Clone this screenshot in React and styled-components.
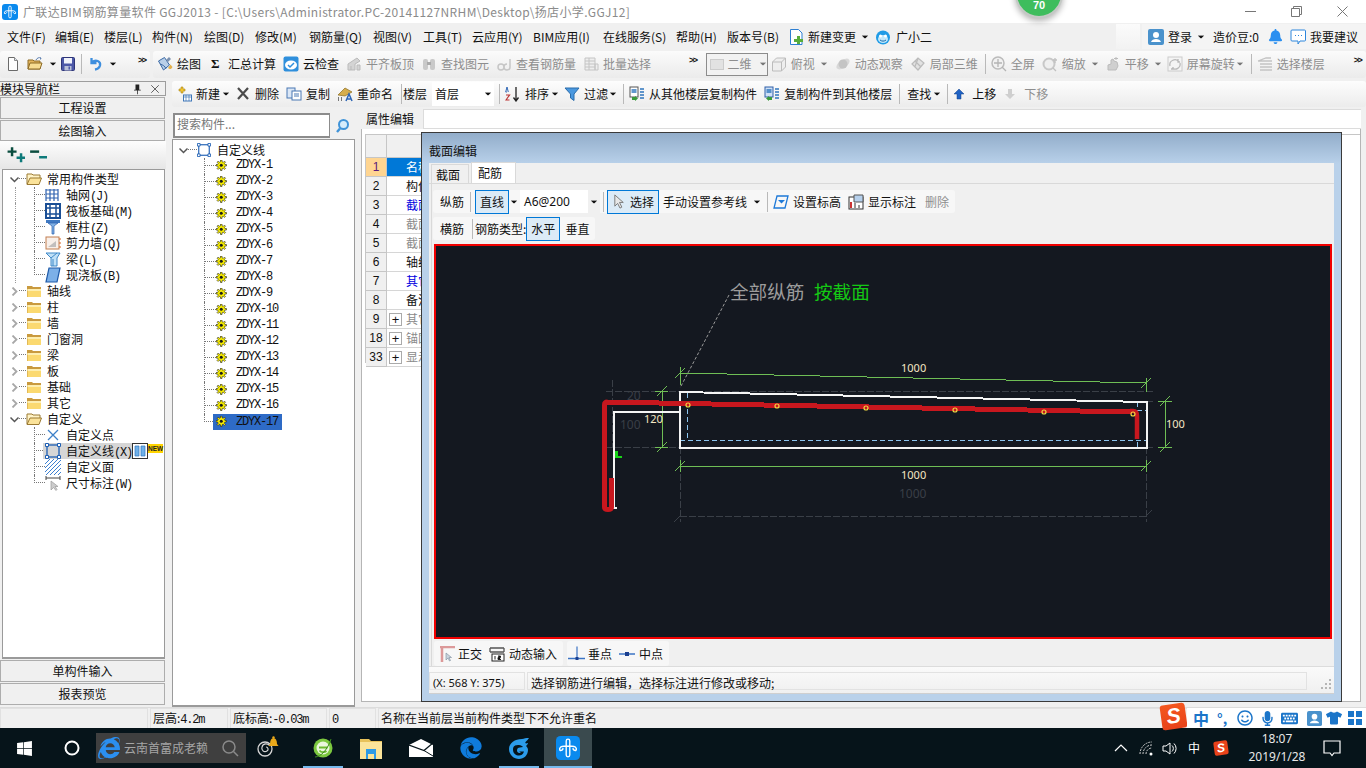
import React from 'react'
import styled, { createGlobalStyle } from 'styled-components'
import { FaWindows, FaEdge, FaInternetExplorer, FaBell, FaTshirt, FaMicrophone, FaRegSmile, FaKeyboard } from 'react-icons/fa'

const CJK = '"Noto Sans CJK SC", "Noto Sans", sans-serif'
const MONO = '"Liberation Mono", monospace'

const GlobalStyle = createGlobalStyle`
    html, body { margin: 0; padding: 0; overflow: hidden; background: #f0f0f0; }
    * { box-sizing: border-box; }
    body { font-family: ${CJK}; font-size: 12px; color: #111; }
`

const Screen = styled.div`
    position: relative;
    width: 1366px;
    height: 768px;
    display: flex;
    flex-direction: column;
    overflow: hidden;
    line-height: 16px;
    white-space: nowrap;
`

/* ---- icons ---- */
const Glyph = styled.svg`
    width: ${p => p.$s || 16}px;
    height: ${p => p.$s || 16}px;
    flex-shrink: 0;
    display: block;
    margin-left: ${p => p.$ml || 0}px;
`

const paths = {
    logo: <><rect width="16" height="16" rx="3" fill="#0a8aee"/><path d="M6.800 3.300a1.200 1.200 0 0 1 2.400 0v9.400a1.200 1.200 0 0 1-2.400 0z" fill="none" stroke="#fff" strokeWidth=".9"/><path d="M2.500 9.500C2 7.500 3.500 6.600 6 6.800h4c2.500-.2 4 .7 3.500 2.700M2.500 9.500c1.200.4 2-.3 2.300-1.300M13.500 9.500c-1.200.4-2-.3-2.300-1.300" fill="none" stroke="#fff" strokeWidth="1"/></>,
    newDoc: <><path d="M3.500 1.500h6l3 3v10h-9z" fill="#fdfdfd" stroke="#6a6a6a"/><path d="M9.500 1.500v3h3" fill="#dfe6ef" stroke="#8a8a8a"/></>,
    open: <><path d="M1 4h5l1 1h6v8H1z" fill="#e2b45c" stroke="#8d6a25"/><path d="M3 7h12l-2 6H1z" fill="#f7dc92" stroke="#8d6a25"/><path d="M9 4c1-2 3-3 5-2l-1 .5M14 2l-.5 1.500" stroke="#5d7fb0" fill="none"/></>,
    save: <><rect x="1.500" y="1.500" width="13" height="13" rx="1" fill="#4c58a8" stroke="#2e3578"/><rect x="4" y="2" width="8" height="5.500" fill="#f0f2fa"/><rect x="4.500" y="10" width="7" height="4.500" fill="#b9c0d8"/><rect x="8.500" y="10.500" width="1.500" height="3" fill="#4c58a8"/></>,
    undo: <path d="M4.500 2v5h5M5 6.500C8.500 3 14 5 13 9.500c-.5 2-2.500 3.500-5 4" stroke="#3d8ede" strokeWidth="2.300" fill="none"/>,
    draw: <><path d="M1.500 5l6-3.500 5 7.500-6 5z" fill="#b9cfe8" stroke="#3c6aa5"/><path d="M3 8c3 1 5 2 6 5" stroke="#3c6aa5" fill="none"/><path d="M9 4l3-3 2 2-3 3z" fill="#7c92b0"/><path d="M11 12c2 2 3.500 1 4.500-1l-2-2.500z" fill="#e3b04b"/></>,
    cloud: <><rect x="0.500" y="0.500" width="15" height="15" rx="2" fill="#2f8fdc"/><ellipse cx="8" cy="9" rx="6" ry="4.500" fill="#fff"/><path d="M5 9l2 2 4-4" stroke="#2f8fdc" strokeWidth="1.500" fill="none"/></>,
    flatten: <path d="M2 14V8l9-6 3 3-5 3v6zM5 14v-4M11 9h3v5h-3z" fill="#d4d4d4" stroke="#bbb"/>,
    binoculars: <><rect x="2" y="3" width="5" height="11" rx="2" fill="#c9c9c9"/><rect x="9" y="3" width="5" height="11" rx="2" fill="#c9c9c9"/><rect x="6" y="6" width="4" height="3" fill="#aaa"/></>,
    glasses: <path d="M2 11a3 3 0 1 0 6 0a3 3 0 1 0-6 0M14 3v8a3 3 0 1 1-3-3" stroke="#c6c6c6" strokeWidth="1.500" fill="none"/>,
    batch: <path d="M2 2h10v12H2zM2 5h10M2 8h10M2 11h10M6 2v12M12 8h3v6h-3z" stroke="#c4c4c4" fill="#eee"/>,
    cube: <path d="M1.500 6l4-4h9v9l-4 4h-9zM1.500 6h9v9M10.500 6l4-4" stroke="#bcbcbc" fill="#eeeeee"/>,
    orbit: <><ellipse cx="8" cy="8" rx="7.500" ry="4" transform="rotate(-35 8 8)" fill="#d8d8d8"/><circle cx="8" cy="8" r="4.500" fill="#c4c4c4"/></>,
    local3d: <path d="M2 8l6-6 6 5-6 7zM5 5l6 6M8 2.500l-3 8" stroke="#bbb" strokeWidth="1.200" fill="#e2e2e2"/>,
    zoomFit: <><circle cx="7" cy="7" r="6" fill="#f1f1f1" stroke="#bbb" strokeWidth="1.500"/><path d="M7 3v8M3 7h8M11 11l4 4" stroke="#b4b4b4" strokeWidth="1.300"/></>,
    zoomQ: <><circle cx="7" cy="8" r="5.500" fill="#efefef" stroke="#c8c8c8" strokeWidth="2"/><path d="M11 12l3 3M13 2v5M11 4h4" stroke="#c0c0c0" strokeWidth="1.300"/></>,
    pan: <path d="M3 14V9l3-1V4l2-1 1 2 3 1 1 4-2 4zM11 1v3M9 2.500h4" stroke="#bbb" fill="#cfcfcf"/>,
    rotate: <><rect x="1" y="1" width="14" height="14" fill="#f4f4f4" stroke="#ccc"/><path d="M3 10a5 5 0 0 1 9-4M13 7a5 5 0 0 1-8 5M4 13h2v-2M11 3v3h2" stroke="#b9b9b9" strokeWidth="1.300" fill="none"/></>,
    floors: <path d="M1 5l8-3h5M1 5h14M3 8h12M3 11h12M3 14h12" stroke="#c3c3c3" strokeWidth="1.300" fill="none"/>,
    newItem: <><path d="M5 1h2v2h2v2H7v2H5V5H3V3h2z" fill="#f2c531" stroke="#a98314" strokeWidth=".6"/><rect x="7.500" y="9" width="8" height="6" fill="#fff" stroke="#3f77b8"/><path d="M7.500 11h8M10 9v6M13 9v6" stroke="#3f77b8" strokeWidth=".7"/></>,
    del: <path d="M3 2l10 11M13 2L3 13" stroke="#4b4b4b" strokeWidth="2.200"/>,
    copy: <><rect x="1" y="2" width="8" height="10" fill="#dbe7f6" stroke="#4b79b3"/><rect x="6" y="5" width="9" height="9" fill="#fff" stroke="#4b79b3"/><path d="M8 8h5M8 10h5" stroke="#4b79b3"/></>,
    rename: <><path d="M1 9l7-7 7 4-7 4z" fill="#d6ad4b" stroke="#8a6c1f" strokeWidth=".7"/><path d="M9 15l3-7 3 7M10.500 13h3" stroke="#2e66b5" strokeWidth="1.500" fill="none"/><path d="M1 11h1v4H1zM4 11h1v4H4z" fill="#777"/></>,
    sort: <><path d="M2 1L.700 6h1.200M2 1l1.300 5" stroke="#2e66b5" fill="none"/><path d="M1 9h3.500L1 14h3.500" stroke="#b33" strokeWidth="1.200" fill="none"/><path d="M11 1v13M8.500 11.500L11 15l2.500-3.500" stroke="#222" strokeWidth="1.300" fill="none"/></>,
    filter: <path d="M1 2h14L10 8v6.500L6.500 12V8z" fill="#4a98df" stroke="#2a6cab"/>,
    copyFrom: <><rect x="1" y="1" width="8" height="10" fill="#fff" stroke="#555"/><path d="M2.500 4h5M2.500 6h5M11 3h4M11 6h4M11 9h4M11 12h4" stroke="#2f75bd" strokeWidth="1.300"/><path d="M3 11h3v-1l3 2.500L6 15v-1H3z" fill="#3a9a3c"/></>,
    copyTo: <><rect x="1" y="1" width="8" height="10" fill="#cfe0f6" stroke="#2f5fa8"/><path d="M2.500 4h5M2.500 6h5M11 3h4M11 6h4M11 9h4M11 12h4" stroke="#2f75bd" strokeWidth="1.300"/><path d="M6 11H3v-1l-3 2.500L3 15v-1h3z" fill="#3a9a3c" transform="translate(2 0)"/></>,
    up: <path d="M8 3l5 5h-3v5H6V8H3z" fill="#1f62c4" stroke="#124088" strokeWidth=".5"/>,
    down: <path d="M6 3h4v5h3l-5 5-5-5h3z" fill="#cfcfcf"/>,
    change: <><path d="M2.500.500h8l3.500 3.500v11.500H2.500z" fill="#fff" stroke="#2d7fd3"/><path d="M9 8h3v3h3v3h-3v2H9v-2H6v-3h3z" fill="#58ad3b" transform="translate(0 -1)"/></>,
    face: <><circle cx="8" cy="8.500" r="7" fill="#1f9be6"/><ellipse cx="8" cy="10" rx="5" ry="4" fill="#bfe7fb"/><circle cx="5.500" cy="7" r="1.500" fill="#fff"/><circle cx="10.500" cy="7" r="1.500" fill="#fff"/><path d="M5 11c2 1.500 4 1.500 6 0" stroke="#1767a8" fill="none"/></>,
    login: <><rect width="16" height="16" rx="2" fill="#4a92cc"/><circle cx="8" cy="6" r="3" fill="#fff"/><path d="M3 13c1-4 9-4 10 0z" fill="#fff"/></>,
    chat: <><path d="M2 1h12.500a1 1 0 0 1 1 1v9a1 1 0 0 1-1 1H10l-2 3v-3H2a1 1 0 0 1-1-1V2a1 1 0 0 1 1-1z" fill="#fff" stroke="#2d86dc"/><path d="M5 6.500h1M8 6.500h1M11 6.500h1" stroke="#2d86dc"/></>,
    pin: <path d="M6 2h5v7h2v1H9v5H8v-5H4V9h2z" fill="#222"/>,
    close: <path d="M3 3l10 10M13 3L3 13" stroke="#333"/>,
    plusTree: <><path d="M4.500 1v8M.500 5h8" stroke="#0b4d3f" strokeWidth="2.200"/><path d="M12.500 6.500v8M8.500 10.500h8" stroke="#0e7a7a" strokeWidth="2.200"/></>,
    minusTree: <><path d="M1 5h8" stroke="#0b4d3f" strokeWidth="2.200"/><path d="M9 10h8" stroke="#0e7a7a" strokeWidth="2.200"/></>,
    search: <><circle cx="8.500" cy="6.500" r="4.500" fill="#d5ecfb" stroke="#3f93d8" strokeWidth="2"/><path d="M5 10.500L2 14" stroke="#3f93d8" strokeWidth="2.400"/></>,
    folder: <><path d="M1 4V3h5l1 1h8v10H1z" fill="#c99a3f"/><path d="M1.500 6h13.500v8H1.500z" fill="#fbd970"/><path d="M1.500 6h13.500v2H1.500z" fill="#fdeeb0"/></>,
    folderOpen: <><path d="M1 13V3h5l1 1h7v3" fill="#fff3c7" stroke="#9b7a33"/><path d="M4 7h11.500l-2.500 6.500H1z" fill="#fbe39a" stroke="#9b7a33"/></>,
    axis: <path d="M1 2v12M5 2v12M9 2v12M13 2v12M1 3h12M1 7h12M1 11h12" stroke="#2f62b0" strokeWidth="1.200"/>,
    raft: <><rect x="1" y="1" width="14" height="14" fill="#fff" stroke="#1a4f96" strokeWidth="2"/><path d="M2 5h12M2 11h12M5 2v12M11 2v12" stroke="#1a4f96" strokeWidth="1.500"/></>,
    column: <><rect x="1" y="1" width="14" height="3" fill="#3f79c2"/><path d="M3 4l4 3v8h2V7l4-3z" fill="#7fb0e4" stroke="#2f62b0" strokeWidth=".7"/></>,
    wall: <><rect x="1" y="2" width="13" height="12" fill="#f8efe9" stroke="#c27e50"/><path d="M3 12l8-6v6z" fill="#aaa" opacity=".7"/><path d="M14 4h2M14 8h2M14 12h2" stroke="#d8631f"/></>,
    beam: <><path d="M1 2h14l-3 5v8H6V7z" fill="#bfe0f7" stroke="#3f88c8"/><path d="M6 7l6-5M8 15V8" stroke="#3f88c8"/></>,
    slab: <path d="M4 1h11l-3 14H1z" fill="#7cb0e8" stroke="#1f5aa8" strokeWidth="1.200"/>,
    point: <path d="M3 3l10 10M13 3L3 13" stroke="#3d80c8" strokeWidth="1.300"/>,
    lineShape: <><rect x="2" y="2" width="12" height="12" fill="none" stroke="#1e5fb4" strokeWidth="1.300"/><path d="M.500.500h3v3h-3zM12.500.500h3v3h-3zM.500 12.500h3v3h-3zM12.500 12.500h3v3h-3z" fill="#fff" stroke="#1e5fb4"/></>,
    hatch: <path d="M0 5l5-5M0 9l9-9M0 13L13 0M1 16L16 1M5 16L16 5M9 16l7-7M13 16l3-3" stroke="#3c7fd0"/>,
    dim: <><path d="M1 3h14M1 1v4M15 1v4" stroke="#444"/><path d="M6 6v9l2.500-2.500 2.500 3 1-1-2-3h3z" fill="#ccc" stroke="#999" strokeWidth=".7"/></>,
    gear: <><path d="M6 0h2v2.300l1.800.7L11.300 1.500l1.400 1.400-1.500 1.500.7 1.600H14v2h-2.100l-.7 1.700 1.500 1.500-1.400 1.400-1.500-1.500-1.800.7V14H6v-2.200l-1.700-.7-1.500 1.500-1.400-1.400 1.500-1.500L2.200 8H0V6h2.200l.7-1.600-1.500-1.500 1.400-1.400 1.500 1.500L6 2.300z" fill="#f6ec00" stroke="#222" strokeWidth=".8"/><circle cx="7" cy="7" r="2" fill="#1a1a1a"/></>,
    columns: <><rect x=".500" y=".500" width="15" height="15" fill="#fff" stroke="#333"/><path d="M3 3h4v10H3zM9 3h4v10H9z" fill="#6fb0e8" stroke="#2f75bd" strokeWidth=".7"/></>,
    cursor: <path d="M3 1v12l3-3 2.500 5 2-1-2.500-5h4z" fill="#e8e8e8" stroke="#777"/>,
    elev: <><path d="M4 2h11l-3 12H1z" fill="none" stroke="#1e79d8" strokeWidth="1.300"/><path d="M5 6h7L8.500 9.500z" fill="#1e79d8"/></>,
    showDim: <><rect x="1" y="3" width="14" height="12" fill="#fff" stroke="#333"/><path d="M6 1h9v7H6z" fill="#b6d0ec" stroke="#555"/><path d="M3 8v6" stroke="#c33" strokeWidth="2"/><path d="M7 9v5M11 11v3" stroke="#333"/></>,
    ortho: <><path d="M1 1h15M3 1v15" stroke="#dc9999" strokeWidth="2.500"/><path d="M7 7v7l2-2 1.500 3 1-.5-1.500-3h2.500z" fill="#c9d4dd" stroke="#7a8c9c" strokeWidth=".6"/></>,
    dynInput: <><path d="M1 2h14M1 6h14M1 2v4M15 2v4" stroke="#555" strokeWidth="1.300"/><rect x="3" y="8" width="12" height="7" fill="#fff" stroke="#222"/><path d="M6 10v3.500M9 10h2.500v1.500H9v2h3" stroke="#222"/></>,
    perp: <><path d="M0 13h17" stroke="#3c74c4" strokeWidth="1.500"/><path d="M9 1v12" stroke="#3c74c4" strokeWidth="1.200"/><rect x="7.500" y="11.500" width="3" height="3" fill="#1b3f8f"/></>,
    mid: <><path d="M0 8h16" stroke="#3c74c4" strokeWidth="1.500"/><rect x="6" y="6" width="4" height="4" fill="#1b3f8f"/></>,
}

function Icon({ name, size, ml, view }) {
    return <Glyph $s={size} $ml={ml} viewBox={view || '0 0 16 16'}>{paths[name]}</Glyph>
}

/* ---- title bar ---- */
const TitleBar = styled.div`
    height: 23px;
    background: #fff;
    display: flex;
    align-items: center;
    padding-left: 2px;
    color: #8b8b8b;
    font-size: 12px;
`
const TitleText = styled.span`
    margin-left: 5px;
    letter-spacing: .34px;
`
const WindowButtons = styled.div`
    margin-left: auto;
    display: flex;
    align-items: center;
    margin-right: 18px;
    gap: 35px;
`
const Badge = styled.div`
    position: absolute;
    left: 1015px;
    top: -30px;
    width: 48px;
    height: 48px;
    border-radius: 50%;
    background: #3ebd5d;
    border: 2px solid #c4c9c5;
    box-shadow: 0 3px 6px rgba(0,0,0,.3);
    color: #fff;
    font: bold 11px "Liberation Sans", sans-serif;
    display: flex;
    align-items: flex-end;
    justify-content: center;
    padding-bottom: 5px;
`

/* ---- menu bar ---- */
const MenuBar = styled.div`
    height: 27px;
    background: #f0f0f0;
    display: flex;
    align-items: center;
    padding-left: 7px;
`
const MenuItem = styled.span`
    width: ${p => p.$w}px;
    flex-shrink: 0;
`
const MenuBlank = styled.i`
    width: 24px;
    height: 25px;
    margin-left: auto;
    background: linear-gradient(#fbfbfb, #f2f2f2);
`
const MenuRight = styled.div`
    margin-left: 2px;
    width: 224px;
    height: 25px;
    display: flex;
    align-items: center;
    padding-left: 6px;
    background: #f4f4f4;
`

/* ---- shared toolbar parts ---- */
const Tool = styled.span`
    margin-left: ${p => p.$ml ?? 4}px;
    color: ${p => p.$muted ? '#8e8e8e' : '#111'};
    flex-shrink: 0;
`
const SigmaMark = styled.span`
    font: bold 13px "Liberation Serif", serif;
    width: 10px;
    margin-left: 10px;
    flex-shrink: 0;
`
const Caret = styled.i`
    width: 8px;
    height: 4px;
    margin-left: ${p => p.$ml ?? 5}px;
    flex-shrink: 0;
    background: ${p => p.$muted ? '#777' : '#111'};
    clip-path: polygon(0 0, 100% 0, 50% 100%);
    transform: scale(.85);
`
const Sep = styled.i`
    width: 1px;
    height: 20px;
    margin-left: ${p => p.$ml ?? 7}px;
    background: #b9b9b9;
    flex-shrink: 0;
`
const Chevrons = styled.span`
    font: bold 9px/10px "Liberation Sans", sans-serif;
    align-self: flex-start;
    margin-left: ${p => p.$ml || 0}px;
    margin-top: 4px;
    letter-spacing: -1.500px;
`

const ToolbarRow = styled.div`
    height: 28px;
    background: #f0f0f0;
    display: flex;
    align-items: center;
`
const ToolGroup = styled.div`
    height: 27px;
    display: flex;
    align-items: center;
    width: ${p => p.$w ? p.$w + 'px' : 'auto'};
    flex: ${p => p.$w ? 'none' : 1};
    margin-left: ${p => p.$ml || 0}px;
    padding-left: ${p => p.$pl || 0}px;
    background: linear-gradient(#fbfbfb, #ebebeb);
    border-radius: 3px;
`
const ViewCombo = styled.div`
    width: 62px;
    height: 23px;
    margin-left: 9px;
    border: 1px solid #8c8c8c;
    display: flex;
    align-items: center;
    padding-left: 3px;
    background: #f2f2f2;
    color: #8e8e8e;
`
const ViewSwatch = styled.i`
    width: 15px;
    height: 11px;
    background: #e2e2e2;
    border: 1px solid #ccc;
    margin-right: 4px;
`

function GrayTool({ icon, label, caret, ml, caretMl }) {
    return (
        <>
            <Icon name={icon} ml={ml ?? 7}/>
            <Tool $muted>{label}</Tool>
            {caret && <Caret $muted $ml={caretMl}/>}
        </>
    )
}

/* ---- workspace ---- */
const Workspace = styled.div`
    height: 629px;
    display: flex;
    background: #f0f0f0;
`
const NavPanel = styled.div`
    width: 166px;
    margin: 3px 0 2px;
    display: flex;
    flex-direction: column;
`
const NavHeader = styled.div`
    height: 15px;
    display: flex;
    align-items: center;
    border: 1px solid #9d9d9d;
    border-left: 0;
    line-height: 13px;
`
const NavButton = styled.div`
    height: ${p => p.$h || 22}px;
    margin: 1px 1px 0 0;
    border: 1px solid #adadad;
    background: #f0f0f0;
    display: flex;
    align-items: center;
    justify-content: center;
    flex-shrink: 0;
`
const NavTools = styled.div`
    height: 28px;
    display: flex;
    align-items: center;
    gap: 4px;
    padding-left: 7px;
    background: linear-gradient(#fdfdfd, #e6e6e6);
    flex-shrink: 0;
`
const TreeBox = styled.div`
    flex: 1;
    background: #fff;
    border: 1px solid #9a9a9a;
    border-bottom-width: 2px;
    padding-top: ${p => p.$pt ?? 1}px;
    margin-left: ${p => p.$ml ?? 2}px;
    margin-right: 1px;
    overflow: hidden;
`
const TreeRow = styled.div`
    height: 16px;
    display: flex;
    align-items: center;
    padding-left: ${p => p.$pl || 0}px;
    position: relative;
    &::before {
        content: ${p => p.$trunk ? '""' : 'none'};
        position: absolute;
        left: ${p => p.$trunk}px;
        top: 0;
        height: ${p => p.$last ? '50%' : '100%'};
        border-left: 1px dotted #777;
    }
`
const Farther = styled.i`
    position: absolute;
    left: 12px;
    top: 0;
    height: 100%;
    border-left: 1px dotted #999;
`
const Chevron = styled.svg`
    width: 9px;
    height: 9px;
    flex-shrink: 0;
    margin-left: ${p => p.$ml || 0}px;
`
const Elbow = styled.i`
    width: ${p => p.$w}px;
    height: 8px;
    margin-top: -8px;
    margin-left: ${p => p.$ml || 0}px;
    border-bottom: 1px dotted #777;
    flex-shrink: 0;
`
const TreeLabel = styled.span`
    margin-left: ${p => p.$ml}px;
    padding: 0 ${p => p.$pad || 0}px;
`
const Latin = styled.span`
    font: 12px/12px ${MONO};
    letter-spacing: -1.2px;
`
const HighlightRow = styled.div`
    display: flex;
    align-items: center;
    height: 16px;
    background: #d6d6d6;
    width: 89px;
    flex-shrink: 0;
`
const NewTag = styled.span`
    font: bold 6.500px "Liberation Sans", sans-serif;
    background: #ffd400;
    color: #222;
    margin: -5px 0 0 0;
    height: 9px;
    line-height: 9px;
`
const CodeLabel = styled.span`
    margin-left: 6px;
    padding: 0 2px;
    height: 16px;
    font: 12px/15px ${MONO};
    letter-spacing: -1.2px;
    color: #111;
    ${p => p.$sel && 'background: #2e6bc6; margin-left: 0; padding-left: 3px; width: 69px; display: flex; align-items: center; gap: 8px;'}
`

function Collapsed({ label }) {
    return (
        <TreeRow $pl={7}>
            <Chevron viewBox="0 0 9 9"><path d="M2.500 .500l4 4-4 4" stroke="#a8a8a8" strokeWidth="1.800" fill="none"/></Chevron>
            <Elbow $w={7}/>
            <Icon name="folder"/>
            <TreeLabel $ml={5}>{label}</TreeLabel>
        </TreeRow>
    )
}

function Expanded({ label }) {
    return (
        <TreeRow $pl={7}>
            <Chevron viewBox="0 0 9 9"><path d="M.500 2.500L4.500 6.500l4-4" stroke="#555" strokeWidth="1.500" fill="none"/></Chevron>
            <Elbow $w={7}/>
            <Icon name="folderOpen"/>
            <TreeLabel $ml={5}>{label}</TreeLabel>
        </TreeRow>
    )
}

function Child({ icon, label, code, last, far }) {
    return (
        <TreeRow $pl={31} $trunk={31} $last={last}>
            {far && <Farther/>}
            <Elbow $w={11}/>
            <Icon name={icon}/>
            <TreeLabel $ml={5}>{label}<Latin>{code}</Latin></TreeLabel>
        </TreeRow>
    )
}

const ComponentArea = styled.div`
    flex: 1;
    margin-left: 6px;
    margin-top: 3px;
    display: flex;
    flex-direction: column;
    min-width: 0;
`
const ComponentToolbar = styled.div`
    height: 26px;
    background: linear-gradient(#fdfdfd, #ececec);
    display: flex;
    align-items: center;
    padding-left: 4px;
    border-radius: 3px;
    flex-shrink: 0;
`
const FloorCombo = styled.div`
    width: 62px;
    height: 24px;
    background: #fff;
    margin-left: 5px;
    display: flex;
    align-items: center;
    padding-left: 3px;
`
const Panes = styled.div`
    flex: 1;
    display: flex;
    min-height: 0;
`
const ComponentPane = styled.div`
    width: 184px;
    display: flex;
    flex-direction: column;
`
const SearchRow = styled.div`
    height: 32px;
    display: flex;
    align-items: flex-end;
    padding: 0 0 1px 1px;
`
const SearchInput = styled.div`
    width: 157px;
    height: 25px;
    background: #fff;
    border: 2px solid #8c8c8c;
    border-right-width: 1px;
    padding-left: 2px;
    line-height: 18px;
    color: #777;
`
const SearchButton = styled.div`
    height: 25px;
    margin-left: 5px;
    display: flex;
    align-items: center;
`
const PropertyPane = styled.div`
    width: 1000px;
    margin-left: 5px;
    margin-top: 2px;
    margin-bottom: 5px;
    display: flex;
    flex-direction: column;
`
const TabLine = styled.div`
    height: 20px;
    display: flex;
`
const PropertyTab = styled.div`
    width: 62px;
    padding-left: 5px;
    background: #f0f0f0;
    line-height: 20px;
`
const TabFill = styled.div`
    flex: 1;
    background: #fff;
    border-top: 1px solid #dcdcdc;
    border-bottom: 1px solid #dcdcdc;
    border-left: 1px solid #dcdcdc;
`
const PropertyBody = styled.div`
    flex: 1;
    background: #fff;
    border: 1px solid #b5b5b5;
    border-top: 0;
    padding: 5px 0 0 3px;
`
const Grid = styled.div`
    display: grid;
    grid-template-columns: 21px 200px;
    grid-auto-rows: 19px;
    border-top: 1px solid #c6c6c6;
    border-left: 1px solid #c6c6c6;
`
const HeadCell = styled.div`
    height: 23px;
    background: #f0f0f0;
    border-right: 1px solid #c6c6c6;
    border-bottom: 1px solid #c6c6c6;
    margin-bottom: -4px;
`
const NumCell = styled.div`
    background: ${p => p.$sel ? '#ffd591' : '#f0f0f0'};
    color: ${p => p.$sel ? '#5c1a7a' : '#111'};
    border-right: 1px solid #c6c6c6;
    border-bottom: 1px solid #c6c6c6;
    text-align: center;
    line-height: 18px;
    font-family: "Liberation Sans", sans-serif;
    grid-column: 1;
    margin-top: 4px;
    margin-bottom: -4px;
`
const NameCell = styled.div`
    background: ${p => p.$sel ? '#0078d7' : '#fff'};
    color: ${p => p.$color};
    border-bottom: 1px solid #d6d6d6;
    line-height: 18px;
    padding-left: ${p => p.$box ? 2 : 19}px;
    display: flex;
    align-items: center;
    margin-top: 4px;
    margin-bottom: -4px;
`
const PlusBox = styled.span`
    width: 13px;
    height: 13px;
    border: 1px solid #aaa;
    margin-right: 4px;
    font: 13px/11px "Liberation Sans", sans-serif;
    text-align: center;
    color: #111;
`

const menus = [
    ['文件(F)', 48], ['编辑(E)', 49], ['楼层(L)', 48], ['构件(N)', 52], ['绘图(D)', 51], ['修改(M)', 54], ['钢筋量(Q)', 64],
    ['视图(V)', 50], ['工具(T)', 49], ['云应用(Y)', 61], ['BIM应用(I)', 70], ['在线服务(S)', 73], ['帮助(H)', 51], ['版本号(B)', 61],
]

const rows = [
    ['1', '名称', '#fff', true], ['2', '构件', '#111'], ['3', '截面', '#0000e0'], ['4', '截面', '#8a8a8a'],
    ['5', '截面', '#8a8a8a'], ['6', '轴线', '#111'], ['7', '其它', '#0000e0'], ['8', '备注', '#111'],
    ['9', '其它', '#8a8a8a', false, true], ['18', '锚固', '#8a8a8a', false, true], ['33', '显示', '#8a8a8a', false, true],
]

/* ---- section editor dialog ---- */
const Dialog = styled.div`
    position: absolute;
    left: 421px;
    top: 132px;
    width: 921px;
    height: 570px;
    border: 1px solid #3a3a3a;
    background: linear-gradient(#92adca, #b9d1ea 31px);
    padding: 0 7px 7px 7px;
    display: flex;
    flex-direction: column;
`
const DialogTitle = styled.div`
    height: 30px;
    padding-top: 10px;
    line-height: 16px;
`
const DialogBody = styled.div`
    flex: 1;
    background: #f0f0f0;
    display: flex;
    flex-direction: column;
`
const Tabs = styled.div`
    height: 21px;
    display: flex;
    align-items: flex-end;
    padding-left: 2px;
    border-bottom: 1px solid #d9d9d9;
`
const Tab = styled.div`
    width: ${p => p.$active ? 45 : 38}px;
    height: ${p => p.$active ? 21 : 19}px;
    margin-left: ${p => p.$active ? 2 : 0}px;
    background: ${p => p.$active ? '#fff' : '#f0f0f0'};
    border: 1px solid #d9d9d9;
    border-bottom: 0;
    padding-left: ${p => p.$active ? 6 : 4}px;
    line-height: 19px;
`
const Page = styled.div`
    flex: 1;
    margin-left: 2px;
    border-left: 1px solid #d9d9d9;
    padding: 6px 0 0 1px;
    display: flex;
    flex-direction: column;
`
const DialogBar = styled.div`
    height: 23px;
    align-self: flex-start;
    margin-bottom: 4px;
    background: #f7f7f7;
    border-radius: 3px;
    display: flex;
    align-items: center;
    padding: 0 6px 0 7px;
`
const Toggle = styled.div`
    height: 24px;
    margin-left: ${p => p.$ml || 0}px;
    padding: 0 4px;
    display: flex;
    align-items: center;
    border: 1px solid #0078d7;
    background: #dcebf7;
    flex-shrink: 0;
`
const RebarCombo = styled.div`
    width: 80px;
    height: 23px;
    background: #fff;
    margin-left: 2px;
    padding-left: 4px;
    display: flex;
    align-items: center;
    justify-content: space-between;
    font-family: "Noto Sans", sans-serif;
`
const ComboArrow = styled.div`
    width: 12px;
    height: 23px;
    background: #f0f0f0;
    display: flex;
    align-items: center;
    justify-content: center;
`
const Canvas = styled.div`
    width: 898px;
    height: 395px;
    border: 2px solid #f10000;
    background: #141820;
    margin-left: 1px;
    flex-shrink: 0;
`
const CanvasSvg = styled.svg`
    display: block;
    width: 894px;
    height: 391px;
`
const SnapBar = styled.div`
    height: 25px;
    margin: 2px 0 0 1px;
    display: flex;
    gap: 4px;
    flex-shrink: 0;
`
const SnapGroup = styled.div`
    background: #f7f7f7;
    display: flex;
    align-items: center;
    padding: 0 6px 0 ${p => p.$pl}px;
    border-radius: 3px;
`
const DialogStatus = styled.div`
    margin-top: auto;
    height: 28px;
    border-top: 1px solid #dcdcdc;
    display: flex;
    gap: 2px;
    background: linear-gradient(#fafafa, #f0f0f0);
    padding: 5px 0 3px;
    margin-left: -4px;
    border-bottom: 1px solid #cfcfcf;
`
const DialogCell = styled.div`
    width: ${p => p.$w}px;
    border: 1px solid #e2e2e2;
    padding-left: 3px;
    line-height: 20px;
    font-family: ${p => p.$num ? '"Noto Sans", sans-serif' : 'inherit'};
    font-size: ${p => p.$num ? 11 : 12}px;
`
const GripBox = styled.div`
    margin: auto 2px 0 auto;
    display: flex;
`

/* ---- status bar and taskbar ---- */
const StatusBar = styled.div`
    height: 21px;
    background: #f0f0f0;
    border-top: 1px solid #dcdcdc;
    display: flex;
    gap: 2px;
`
const StatusCell = styled.div`
    width: ${p => p.$w}px;
    flex: ${p => p.$w ? 'none' : 1};
    border: 1px solid #e1e1e1;
    border-bottom: 0;
    padding-left: 2px;
    line-height: 18px;
`
const ImeBar = styled.div`
    position: absolute;
    left: 1187px;
    top: 708px;
    width: 179px;
    height: 20px;
    background: #fff;
    display: flex;
    align-items: center;
    color: #1b75c9;
`
const SogouMark = styled.div`
    position: absolute;
    left: ${p => p.$x}px;
    top: ${p => p.$y}px;
    width: ${p => p.$s}px;
    height: ${p => p.$s}px;
    background: linear-gradient(#f4571f, #e8421a);
    border-radius: 3px;
    transform: rotate(-8deg);
    color: #fff;
    font: italic bold ${p => p.$s * .85}px/${p => p.$s}px "Liberation Sans", sans-serif;
    text-align: center;
`
const ImeItem = styled.span`
    display: flex;
    position: absolute;
    left: ${p => p.$x}px;
    font-size: ${p => p.$fs || 16}px;
    font-weight: bold;
    line-height: 16px;
`
const Taskbar = styled.div`
    height: 40px;
    background: #06141a;
    display: flex;
    align-items: center;
    color: #fff;
`
const TaskSlot = styled.div`
    width: ${p => p.$w || 48}px;
    height: 40px;
    margin-left: ${p => p.$ml || 0}px;
    display: flex;
    align-items: center;
    justify-content: center;
    flex-shrink: 0;
    background:
        ${p => p.$mark ? `linear-gradient(#76b9ed, #76b9ed) center bottom / ${p.$active ? 48 : 40}px 2px no-repeat,` : ''}
        ${p => p.$active ? '#3a4a4e' : 'transparent'};
`
const SearchBox = styled.div`
    width: 150px;
    height: 30px;
    background: #3f3f3f;
    display: flex;
    align-items: center;
    padding-left: 2px;
    flex-shrink: 0;
`
const SearchHint = styled.span`
    margin-left: 4px;
    color: #a5a5a5;
`
const Tray = styled.div`
    margin-left: auto;
    display: flex;
    align-items: center;
    height: 40px;
`
const TrayLang = styled.span`
    margin-left: 10px;
    color: #fff;
`
const SogouTray = styled.span`
    width: 14px;
    height: 14px;
    margin-left: 14px;
    background: #e8421a;
    border-radius: 2px;
    transform: rotate(-8deg);
    color: #fff;
    font: italic bold 12px/14px "Liberation Sans", sans-serif;
    text-align: center;
`
const ClockBox = styled.div`
    width: 84px;
    margin-left: 7px;
    text-align: center;
    line-height: 18px;
    font-family: "Noto Sans", sans-serif;
    font-size: 12px;
    color: #e8e8e8;
`
const TrayEnd = styled.i`
    width: 25px;
`

function Drawing() {
    const dark = '#3a3f47'
    const tick = '#6fbe55'
    const dots = [[688, 405], [777, 406], [866, 408], [955, 410], [1044, 412], [1133, 414]]
    const ticks = [[680, 373], [680, 466], [1146, 383], [1146, 466], [662, 391], [662, 447], [1165, 401], [1165, 447]]
    const Lbl = ({ x, y, c, s = 11, children }) => <text x={x} y={y} fill={c} fontSize={s} fontFamily='"Noto Sans", sans-serif'>{children}</text>
    return (
        <CanvasSvg viewBox="436 246 894 391">
            <g strokeDasharray="7 2" stroke={dark} fill="none" shapeRendering="crispEdges">
                <path d="M606 391H1155M606 447H680M1146 447H1155M680 516H1146M1146 401H1155"/>
                <path d="M680 447V522M1146 447V522M612 380V447"/>
            </g>
            <path d="M729 295L680 388" stroke="#9a9a9a" strokeDasharray="3 2" fill="none"/>
            <path d="M680 516l-6 6M1146 516l6-6" stroke={dark}/>
            <g stroke="#8cc4ee" strokeDasharray="5 3" fill="none" shapeRendering="crispEdges">
                <path d="M687 393V440M680 440H1146M1137 402V447M1137 410H1146"/>
            </g>
            <g stroke={tick} fill="none" shapeRendering="crispEdges">
                <line x1="680" y1="373" x2="1146" y2="383"/>
                <path d="M680 466H1146M662 391V447M1165 401V447M680 367V385M680 460V472M1146 378V392M1146 460V472"/>
                <path d="M655 391h13M655 447h13M1158 401h14M1158 447h14"/>
            </g>
            <g stroke={tick}>
                {ticks.map(([x, y], i) => <line key={i} x1={x - 5} y1={y + 5} x2={x + 5} y2={y - 5}/>)}
            </g>
            <g stroke="#f4f4f4" fill="none" shapeRendering="crispEdges">
                <line x1="680" y1="392" x2="1146" y2="402" strokeWidth="2"/>
                <path d="M680 391V448H1147V401" strokeWidth="2"/>
                <path d="M679 412H614V508M611 508H617" strokeWidth="1.500"/>
            </g>
            <g stroke="#c8171e" fill="none">
                <path d="M604.500 405V507q0 2.500 3.500 2.500t3.500-2.500V478" strokeWidth="5"/>
                <line x1="606" y1="402" x2="1132" y2="412" strokeWidth="5" shapeRendering="crispEdges"/>
                <path d="M1130 411h3q4 0 4 5V439" strokeWidth="4.500"/>
                <path d="M604.500 405q0-3 3-3" strokeWidth="5"/>
            </g>
            <path d="M615 451h3v5h4v2h-7z" fill="#19d419"/>
            {dots.map(([x, y]) => <circle key={x} cx={x} cy={y} r="2" fill="none" stroke="#f2d642" strokeWidth="1.200"/>)}
            <text x="730" y="299" fontSize="18.600" fill="#9c9c9c" fontFamily={CJK}>全部纵筋</text>
            <text x="814" y="299" fontSize="18.600" fill="#14c814" fontFamily={CJK}>按截面</text>
            <Lbl x={901} y={372} c="#f4e6c4">1000</Lbl>
            <Lbl x={901} y={479} c="#f4e6c4">1000</Lbl>
            <Lbl x={899} y={498} c={dark} s={12}>1000</Lbl>
            <Lbl x={644} y={423} c="#f4e6c4">120</Lbl>
            <Lbl x={1166} y={428} c="#f4e6c4">100</Lbl>
            <Lbl x={620} y={429} c={dark} s={12}>100</Lbl>
            <Lbl x={627} y={400} c={dark} s={12}>20</Lbl>
        </CanvasSvg>
    )
}

function App() {
    const codes = Array.from({ length: 16 }, (_, i) => `ZDYX-${i + 1}`)
    return (
        <>
            <GlobalStyle/>
            <Screen>
                <TitleBar>
                    <Icon name="logo"/>
                    <TitleText>广联达BIM钢筋算量软件 GGJ2013 - [C:\Users\Administrator.PC-20141127NRHM\Desktop\扬店小学.GGJ12]</TitleText>
                    <WindowButtons>
                        <Glyph $s={11} viewBox="0 0 11 11"><path d="M0 5.500h11" stroke="#777"/></Glyph>
                        <Glyph $s={11} viewBox="0 0 11 11"><path d="M.500 2.500h8v8h-8zM2.500 2.500v-2h8v8h-2" stroke="#777" fill="none"/></Glyph>
                        <Glyph $s={11} viewBox="0 0 11 11"><path d="M.500.500l10 10M10.500.500l-10 10" stroke="#777" fill="none"/></Glyph>
                    </WindowButtons>
                </TitleBar>
                <Badge>70</Badge>

                <MenuBar>
                    {menus.map(([m, w]) => <MenuItem key={m} $w={w}>{m}</MenuItem>)}
                    <Icon name="change"/>
                    <Tool>新建变更</Tool>
                    <Caret/>
                    <Icon name="face" ml={6}/>
                    <Tool $ml={5}>广小二</Tool>
                    <MenuBlank/>
                    <MenuRight>
                        <Icon name="login"/>
                        <Tool>登录</Tool>
                        <Caret/>
                        <Tool $ml={8}>造价豆:0</Tool>
                        <FaBell size={15} color="#2b8ff0" style={{ marginLeft: 9 }}/>
                        <Icon name="chat" ml={7}/>
                        <Tool>我要建议</Tool>
                    </MenuRight>
                </MenuBar>

                <ToolbarRow>
                    <ToolGroup $w={150}>
                        <Icon name="newDoc" ml={5}/>
                        <Icon name="open" ml={6}/>
                        <Caret $ml={6}/>
                        <Icon name="save" ml={3}/>
                        <Sep $ml={5}/>
                        <Icon name="undo" ml={5}/>
                        <Caret $ml={6}/>
                        <Chevrons $ml={21}>&gt;&gt;</Chevrons>
                    </ToolGroup>
                    <ToolGroup $ml={3} $pl={4}>
                        <Icon name="draw"/>
                        <Tool>绘图</Tool>
                        <SigmaMark>Σ</SigmaMark>
                        <Tool $ml={7}>汇总计算</Tool>
                        <Icon name="cloud" ml={7}/>
                        <Tool>云检查</Tool>
                        <GrayTool icon="flatten" label="平齐板顶"/>
                        <GrayTool icon="binoculars" label="查找图元"/>
                        <GrayTool icon="glasses" label="查看钢筋量"/>
                        <GrayTool icon="batch" label="批量选择"/>
                        <Chevrons $ml={38}>&gt;&gt;</Chevrons>
                        <ViewCombo><ViewSwatch/>二维<Caret $muted $ml={7}/></ViewCombo>
                        <GrayTool icon="cube" label="俯视" caret ml={3}/>
                        <GrayTool icon="orbit" label="动态观察"/>
                        <GrayTool icon="local3d" label="局部三维"/>
                        <Sep/>
                        <GrayTool icon="zoomFit" label="全屏" ml={5}/>
                        <GrayTool icon="zoomQ" label="缩放" caret/>
                        <GrayTool icon="pan" label="平移" caret ml={6}/>
                        <GrayTool icon="rotate" label="屏幕旋转" caret caretMl={1} ml={5}/>
                        <Sep $ml={7}/>
                        <GrayTool icon="floors" label="选择楼层" ml={5}/>
                        <Chevrons $ml={29}>&gt;&gt;</Chevrons>
                    </ToolGroup>
                </ToolbarRow>

                <Workspace>
                    <NavPanel>
                        <NavHeader>
                            模块导航栏
                            <Icon name="pin" size={12} ml={71}/>
                            <Icon name="close" size={12} ml={6}/>
                        </NavHeader>
                        <NavButton>工程设置</NavButton>
                        <NavButton $h={21}>绘图输入</NavButton>
                        <NavTools>
                            <Icon name="plusTree" size={18}/>
                            <Icon name="minusTree" size={18}/>
                        </NavTools>
                        <TreeBox>
                            <Expanded label="常用构件类型"/>
                            <Child far icon="axis" label="轴网" code="(J)"/>
                            <Child far icon="raft" label="筏板基础" code="(M)"/>
                            <Child far icon="column" label="框柱" code="(Z)"/>
                            <Child far icon="wall" label="剪力墙" code="(Q)"/>
                            <Child far icon="beam" label="梁" code="(L)"/>
                            <Child far icon="slab" label="现浇板" code="(B)" last/>
                            {['轴线', '柱', '墙', '门窗洞', '梁', '板', '基础', '其它'].map(l => <Collapsed key={l} label={l}/>)}
                            <Expanded label="自定义"/>
                            <Child icon="point" label="自定义点"/>
                            <TreeRow $pl={31} $trunk={31}>
                                <Elbow $w={9}/>
                                <HighlightRow>
                                    <Icon name="lineShape" ml={2}/>
                                    <TreeLabel $ml={5}>自定义线<Latin>(X)</Latin></TreeLabel>
                                </HighlightRow>
                                <Icon name="columns"/>
                                <NewTag>NEW</NewTag>
                            </TreeRow>
                            <Child icon="hatch" label="自定义面"/>
                            <Child icon="dim" label="尺寸标注" code="(W)" last/>
                        </TreeBox>
                        <NavButton>单构件输入</NavButton>
                        <NavButton>报表预览</NavButton>
                    </NavPanel>

                    <ComponentArea>
                        <ComponentToolbar>
                            <Icon name="newItem"/>
                            <Tool>新建</Tool>
                            <Caret $ml={2}/>
                            <Icon name="del" ml={5}/>
                            <Tool>删除</Tool>
                            <Icon name="copy" ml={7}/>
                            <Tool>复制</Tool>
                            <Icon name="rename" ml={7}/>
                            <Tool>重命名</Tool>
                            <Sep $ml={8}/>
                            <Tool $ml={1}>楼层</Tool>
                            <FloorCombo>首层<Caret $ml={25}/></FloorCombo>
                            <Sep $ml={5}/>
                            <Icon name="sort" ml={5}/>
                            <Tool>排序</Tool>
                            <Caret $ml={2}/>
                            <Icon name="filter" ml={5}/>
                            <Tool>过滤</Tool>
                            <Caret $ml={1}/>
                            <Sep $ml={6}/>
                            <Icon name="copyFrom" ml={5}/>
                            <Tool>从其他楼层复制构件</Tool>
                            <Icon name="copyTo" ml={7}/>
                            <Tool>复制构件到其他楼层</Tool>
                            <Sep/>
                            <Tool $ml={7}>查找</Tool>
                            <Caret $ml={2}/>
                            <Sep $ml={6}/>
                            <Icon name="up" ml={3}/>
                            <Tool $ml={5}>上移</Tool>
                            <Icon name="down" ml={6}/>
                            <Tool $ml={6} $muted>下移</Tool>
                        </ComponentToolbar>
                        <Panes>
                            <ComponentPane>
                                <SearchRow>
                                    <SearchInput>搜索构件...</SearchInput>
                                    <SearchButton><Icon name="search"/></SearchButton>
                                </SearchRow>
                                <TreeBox $ml={0} $pt={2}>
                                    <TreeRow $pl={6}>
                                        <Chevron viewBox="0 0 9 9"><path d="M.500 2.500L4.500 6.500l4-4" stroke="#555" strokeWidth="1.500" fill="none"/></Chevron>
                                        <Elbow $w={9}/>
                                        <Icon name="lineShape" size={14}/>
                                        <TreeLabel $ml={6}>自定义线</TreeLabel>
                                    </TreeRow>
                                    {codes.map(c => (
                                        <TreeRow key={c} $pl={31} $trunk={31}>
                                            <Elbow $w={12}/>
                                            <Icon name="gear" size={12}/>
                                            <CodeLabel>{c}</CodeLabel>
                                        </TreeRow>
                                    ))}
                                    <TreeRow $pl={31} $trunk={31} $last>
                                        <Elbow $w={9}/>
                                        <CodeLabel $sel>
                                            <Icon name="gear" size={12}/>
                                            ZDYX-17
                                        </CodeLabel>
                                    </TreeRow>
                                </TreeBox>
                            </ComponentPane>
                            <PropertyPane>
                                <TabLine>
                                    <PropertyTab>属性编辑</PropertyTab>
                                    <TabFill/>
                                </TabLine>
                                <PropertyBody>
                                    <Grid>
                                        <HeadCell/><HeadCell/>
                                        {rows.map(([n, t, c, sel, box]) => (
                                            <React.Fragment key={n}>
                                                <NumCell $sel={sel}>{n}</NumCell>
                                                <NameCell $sel={sel} $color={c} $box={box}>
                                                    {box && <PlusBox>+</PlusBox>}
                                                    {t}
                                                </NameCell>
                                            </React.Fragment>
                                        ))}
                                    </Grid>
                                </PropertyBody>
                            </PropertyPane>
                        </Panes>
                    </ComponentArea>
                </Workspace>

                <Dialog>
                    <DialogTitle>截面编辑</DialogTitle>
                    <DialogBody>
                        <Tabs>
                            <Tab>截面</Tab>
                            <Tab $active>配筋</Tab>
                        </Tabs>
                        <Page>
                            <DialogBar>
                                <Tool $ml={0}>纵筋</Tool>
                                <Sep $ml={6}/>
                                <Toggle $ml={4}>直线</Toggle>
                                <Caret $ml={1}/>
                                <RebarCombo>A6@200<ComboArrow><Caret $ml={0}/></ComboArrow></RebarCombo>
                                <Sep $ml={3}/>
                                <Toggle $ml={3}><Icon name="cursor" size={15}/><Tool $ml={3}>选择</Tool></Toggle>
                                <Tool $ml={4}>手动设置参考线</Tool>
                                <Caret $ml={6}/>
                                <Sep $ml={6}/>
                                <Icon name="elev" ml={5}/>
                                <Tool>设置标高</Tool>
                                <Icon name="showDim" ml={7}/>
                                <Tool>显示标注</Tool>
                                <Tool $ml={9} $muted>删除</Tool>
                            </DialogBar>
                            <DialogBar>
                                <Tool $ml={0}>横筋</Tool>
                                <Sep $ml={8}/>
                                <Tool $ml={2}>钢筋类型:</Tool>
                                <Toggle $ml={0}>水平</Toggle>
                                <Tool $ml={5}>垂直</Tool>
                            </DialogBar>
                            <Canvas><Drawing/></Canvas>
                            <SnapBar>
                                <SnapGroup $pl={5}>
                                    <Icon name="ortho"/>
                                    <Tool $ml={3}>正交</Tool>
                                    <Icon name="dynInput" ml={7}/>
                                    <Tool>动态输入</Tool>
                                </SnapGroup>
                                <SnapGroup $pl={1}>
                                    <Icon name="perp" size={17} view="0 0 17 16"/>
                                    <Tool $ml={3}>垂点</Tool>
                                    <Icon name="mid" ml={7}/>
                                    <Tool>中点</Tool>
                                </SnapGroup>
                            </SnapBar>
                            <DialogStatus>
                                <DialogCell $w={96} $num>(X: 568 Y: 375)</DialogCell>
                                <DialogCell $w={780}>选择钢筋进行编辑，选择标注进行修改或移动;</DialogCell>
                                <GripBox>
                                    <Glyph $s={12} viewBox="0 0 12 12"><path d="M9 1h2v2H9zM5 5h2v2H5zM9 5h2v2H9zM1 9h2v2H1zM5 9h2v2H5zM9 9h2v2H9z" fill="#b5b5b5"/></Glyph>
                                </GripBox>
                            </DialogStatus>
                        </Page>
                    </DialogBody>
                </Dialog>

                <StatusBar>
                    <StatusCell $w={148}/>
                    <StatusCell $w={78}>层高:<Latin>4.2m</Latin></StatusCell>
                    <StatusCell $w={97}>底标高:<Latin>-0.03m</Latin></StatusCell>
                    <StatusCell $w={47}><Latin>0</Latin></StatusCell>
                    <StatusCell>名称在当前层当前构件类型下不允许重名</StatusCell>
                </StatusBar>

                <SogouMark $x={1161} $y={704} $s={25}>S</SogouMark>
                <ImeBar>
                    <ImeItem $x={6}>中</ImeItem>
                    <ImeItem $x={30} $fs={14}>°,</ImeItem>
                    <ImeItem $x={50}><FaRegSmile size={16}/></ImeItem>
                    <ImeItem $x={73}><FaMicrophone size={15}/></ImeItem>
                    <ImeItem $x={94}><FaKeyboard size={17}/></ImeItem>
                    <ImeItem $x={120}><Icon name="login" size={15}/></ImeItem>
                    <ImeItem $x={139}><FaTshirt size={16}/></ImeItem>
                    <ImeItem $x={161}>
                        <Glyph $s={14} viewBox="0 0 14 14"><path d="M0 0h6v6H0zM8 0h6v6H8zM0 8h6v6H0zM8 8h6v6H8z" fill="#1b75c9"/></Glyph>
                    </ImeItem>
                </ImeBar>

                <Taskbar>
                    <TaskSlot><FaWindows size={17} color="#fff"/></TaskSlot>
                    <TaskSlot>
                        <Glyph $s={16} viewBox="0 0 16 16"><circle cx="8" cy="8" r="6.500" fill="none" stroke="#fff" strokeWidth="2"/></Glyph>
                    </TaskSlot>
                    <SearchBox>
                        <FaInternetExplorer size={22} color="#2b8ff0"/>
                        <SearchHint>云南首富成老赖</SearchHint>
                        <Glyph $s={18} $ml={13} viewBox="0 0 18 18"><circle cx="8" cy="8" r="6" fill="none" stroke="#8a8a8a" strokeWidth="1.500"/><path d="M12.500 12.500L17 17" stroke="#8a8a8a" strokeWidth="1.500"/></Glyph>
                    </SearchBox>
                    <TaskSlot $ml={-2}>
                        <Glyph $s={28} viewBox="0 0 28 28">
                            <circle cx="11" cy="15" r="7" fill="none" stroke="#d6d6d6" strokeWidth="1.300"/>
                            <path d="M16 12c-2-3-7-3-8 1-1 3 2 6 5 4 2-1 1-4-1-4" fill="none" stroke="#d6d6d6" strokeWidth="1.200"/>
                            <path d="M16 10c0-4 1.500-6 3.500-6s3.500 2 3.500 6l1.500 2h-10z" fill="#e9a91b"/>
                            <circle cx="19.500" cy="3.500" r="1.200" fill="#e9a91b"/>
                        </Glyph>
                    </TaskSlot>
                    <TaskSlot $ml={7} $mark>
                        <Glyph $s={24} viewBox="0 0 24 24">
                            <circle cx="12" cy="12" r="9.500" fill="#7cc83f"/>
                            <circle cx="12" cy="12" r="6.500" fill="#eaf7dc"/>
                            <path d="M8 11.500h8.500M8.500 14.500c1.500 2 5 2.200 7 .5" stroke="#6cbb2f" strokeWidth="1.800" fill="none"/>
                            <path d="M4 21c6 0 13-8 16-18" stroke="#3f8f1e" strokeWidth="1" fill="none"/>
                        </Glyph>
                    </TaskSlot>
                    <TaskSlot>
                        <Glyph $s={22} viewBox="0 0 22 22">
                            <path d="M0 2h9l2 2h11v18H0z" fill="#e8c25a"/>
                            <path d="M0 5h22v17H0z" fill="#fbe49a"/>
                            <path d="M6 12h10v10h-2v-5H8v5H6z" fill="#2e9be6"/>
                        </Glyph>
                    </TaskSlot>
                    <TaskSlot $w={52}>
                        <Glyph $s={24} viewBox="0 0 24 18">
                            <path d="M0 6L12 0l12 6v12H0z" fill="#fff"/>
                            <path d="M0 6l15 5.500L24 4" stroke="#06141a" strokeWidth="1.300" fill="none"/>
                            <path d="M15 11.500L24 17" stroke="#06141a"/>
                        </Glyph>
                    </TaskSlot>
                    <TaskSlot><FaEdge size={22} color="#0f7bdc"/></TaskSlot>
                    <TaskSlot $mark>
                        <Glyph $s={26} viewBox="0 0 26 26">
                            <path d="M23 3c-3 0-5 .5-7 1C9 4 3 8 3 14c0 6 5 10 10 10s9-4 9-9c0-2-1-3-2-4 1-1 2-2 2-3l-2 .5c-1-.5-1-1 0-2 1-1 2-2 3-3.500zM13 10c2 0 3 1 4 2l-3 .5c-2 0-3 1-3 3s2 3 4 2l-2-1h5c-1 3-3 4-5 4-3 0-6-2-6-6s3-4.500 6-4.500z" fill="#2b9ceb"/>
                        </Glyph>
                    </TaskSlot>
                    <TaskSlot $active $mark $ml={1}>
                        <Icon name="logo" size={24}/>
                    </TaskSlot>
                    <Tray>
                        <Glyph $s={14} viewBox="0 0 14 14"><path d="M1 10l6-6 6 6" stroke="#fff" strokeWidth="1.200" fill="none"/></Glyph>
                        <Glyph $s={15} $ml={11} viewBox="0 0 15 15"><path d="M1 13a12 12 0 0 1 12-12M4 13a9 9 0 0 1 9-9M7 13a6 6 0 0 1 6-6" stroke="#cfcfcf" strokeDasharray="2 1" fill="none"/><circle cx="12" cy="13" r="1.500" fill="#fff"/></Glyph>
                        <Glyph $s={16} $ml={8} viewBox="0 0 16 16"><path d="M1 6h3l4-3v11l-4-3H1zM10 5.500a4 4 0 0 1 0 6M12 3.500a7 7 0 0 1 0 10" stroke="#fff" fill="none"/></Glyph>
                        <TrayLang>中</TrayLang>
                        <SogouTray>S</SogouTray>
                        <ClockBox>18:07<br/>2019/1/28</ClockBox>
                        <Glyph $s={18} $ml={4} viewBox="0 0 18 18"><path d="M1 2h16v12h-6l-2 2.500L7 14H1z" fill="none" stroke="#fff" strokeWidth="1.200"/></Glyph>
                        <TrayEnd/>
                    </Tray>
                </Taskbar>
            </Screen>
        </>
    )
}

export default App
